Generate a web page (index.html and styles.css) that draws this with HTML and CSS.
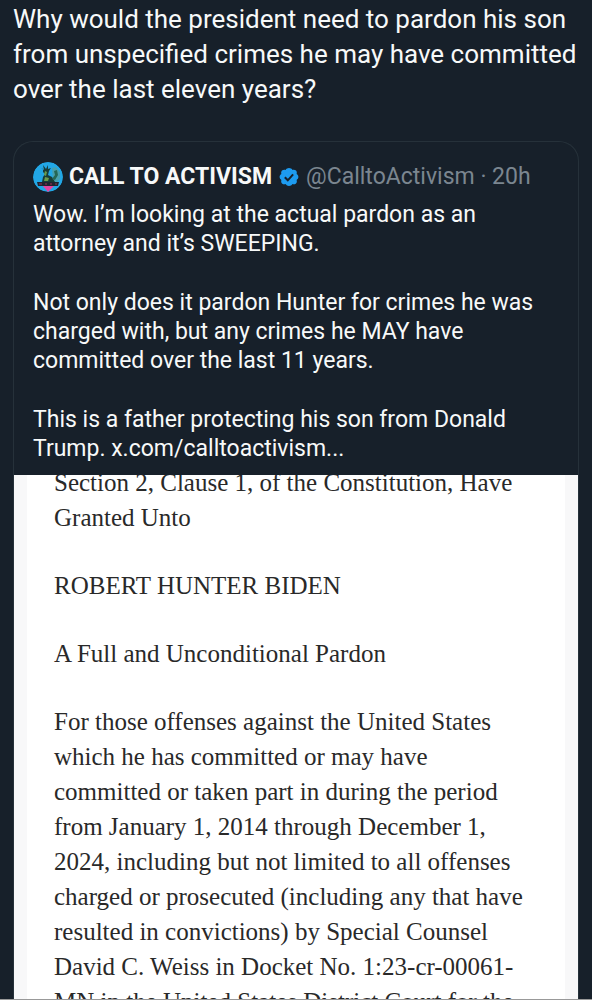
FILE: index.html
```html
<!DOCTYPE html>
<html lang="en">
<head>
    <meta charset="UTF-8">
    <meta name="viewport" content="width=device-width, initial-scale=1.0">
    <title>Post</title>
    <link rel="stylesheet" href="styles.css">
</head>
<body>

<main class="post">
    <p class="post-text">Why would the president need to pardon his son<br>
    from unspecified crimes he may have committed<br>
    over the last eleven years?</p>

    <article class="quote">
        <header class="quote-header">
            <svg class="avatar" viewBox="0 0 30 30" aria-hidden="true">
                <circle cx="15" cy="15" r="15" fill="#22a7e6"/>
                <path d="M19 6l4-1 4 5 0 7-4 4-3-3z" fill="#479fae"/>
                <path d="M8 6l3 2-1-5 3 4 2-4 0 4 3-1-2 3-1 4 4 2 3 5-13 0 1-5 2-3-2-2 0-3z" fill="#193d38"/>
                <path d="M12 9l2 1-1 4-2-1zM12 15l4 1-1 3-4 0z" fill="#6b9b4b"/>
                <path d="M21 9l3-1 1 5-3 5-3-1 3-4z" fill="#266654"/>
                <path d="M9 23l6-1 7 1-7 7z" fill="#e445a2"/>
                <path d="M4 20h22l-1 4H5z" fill="#202532"/>
                <path d="M6 22h3M12 22h2M17 22h2M22 22h2" stroke="#983750" stroke-width="1"/>
            </svg>
            <strong class="name">CALL TO ACTIVISM</strong>
            <svg class="badge" viewBox="0 0 22 22" role="img" aria-label="Verified">
                <path fill="#1d9bf0" d="M20.400 11c0-1.200-.7-2.300-1.800-2.900.5-1.300.2-2.700-.6-3.500-.9-.9-2.200-1.100-3.500-.7C13.900 2.700 12.400 2 11 2s-2.700.7-3.400 1.900c-1.300-.4-2.700-.2-3.600.7-.8.9-1.100 2.300-.6 3.500C2.300 8.700 1.600 9.800 1.600 11s.7 2.300 1.800 2.900c-.5 1.300-.2 2.700.6 3.500.9.900 2.300 1.100 3.600.7.700 1.200 2 1.900 3.400 1.900s2.900-.7 3.500-1.900c1.300.4 2.600.2 3.500-.7.900-.9 1.100-2.200.6-3.500 1.100-.6 1.800-1.700 1.800-2.900z"/>
                <path d="M6.800 11.300l3 3 5.300-6" fill="none" stroke="#17202a" stroke-width="2"/>
            </svg>
            <span class="handle">@CalltoActivism · 20h</span>
        </header>

        <div class="quote-text">
            <p>Wow. I’m looking at the actual pardon as an<br>
            attorney and it’s SWEEPING.</p>
            <p>Not only does it pardon Hunter for crimes he was<br>
            charged with, but any crimes he MAY have<br>
            committed over the last 11 years.</p>
            <p>This is a father protecting his son from Donald<br>
            Trump. x.com/calltoactivism...</p>
        </div>

        <div class="document">
            <div class="paper">
                <p>Section 2, Clause 1, of the Constitution, Have<br>
                Granted Unto</p>
                <p>ROBERT HUNTER BIDEN</p>
                <p>A Full and Unconditional Pardon</p>
                <p>For those offenses against the United States<br>
                which he has committed or may have<br>
                committed or taken part in during the period<br>
                from January 1, 2014 through December 1,<br>
                2024, including but not limited to all offenses<br>
                charged or prosecuted (including any that have<br>
                resulted in convictions) by Special Counsel<br>
                David C. Weiss in Docket No. 1:23-cr-00061-<br>
                MN in the United States District Court for the</p>
            </div>
        </div>
    </article>
</main>

</body>
</html>
```

FILE: styles.css
```css
body {
    margin: 0;
    background-color: #17202a;
    color: #f7f9f9;
    font-family: Roboto, "Liberation Sans", sans-serif;
}

p {
    margin: 0;
}

.post {
    display: flex;
    flex-direction: column;
    gap: 34px;
    box-sizing: border-box;
    height: 100vh;
    padding: 2px 13px 0;
    overflow: hidden;
    border-bottom: 1px solid #999;
}

.post-text {
    font-size: 26px;
    line-height: 35px;
    white-space: nowrap;
}

.quote {
    flex: 1;
    display: flex;
    flex-direction: column;
    min-height: 0;
    overflow: hidden;
    border: 1px solid #26313a;
    border-bottom: none;
    border-radius: 20px 20px 0 0;
}

.quote-header {
    display: flex;
    align-items: center;
    gap: 6px;
    padding: 19px 19px 0;
    font-size: 23px;
    line-height: 32px;
    white-space: nowrap;
}

.avatar {
    width: 30px;
    height: 30px;
    border-radius: 50%;
}

.badge {
    width: 22px;
    height: 22px;
}

.name {
    font-weight: 700;
}

.handle {
    color: #7b8690;
}

.quote-text {
    display: flex;
    flex-direction: column;
    gap: 30px;
    padding: 7px 19px 12px;
    font-size: 23px;
    line-height: 29px;
    white-space: nowrap;
}

.document {
    flex: 1;
    min-height: 0;
    padding: 0 13px;
    overflow: hidden;
    background-color: #f8f8f9;
}

/* starts a little above the frame, the first line is cropped */
.paper {
    display: flex;
    flex-direction: column;
    gap: 33px;
    margin-top: -10px;
    padding-left: 27px;
    background-color: #fff;
    color: #292929;
    font-family: Georgia, "Liberation Serif", serif;
    font-size: 25px;
    line-height: 35px;
    white-space: nowrap;
}
```
